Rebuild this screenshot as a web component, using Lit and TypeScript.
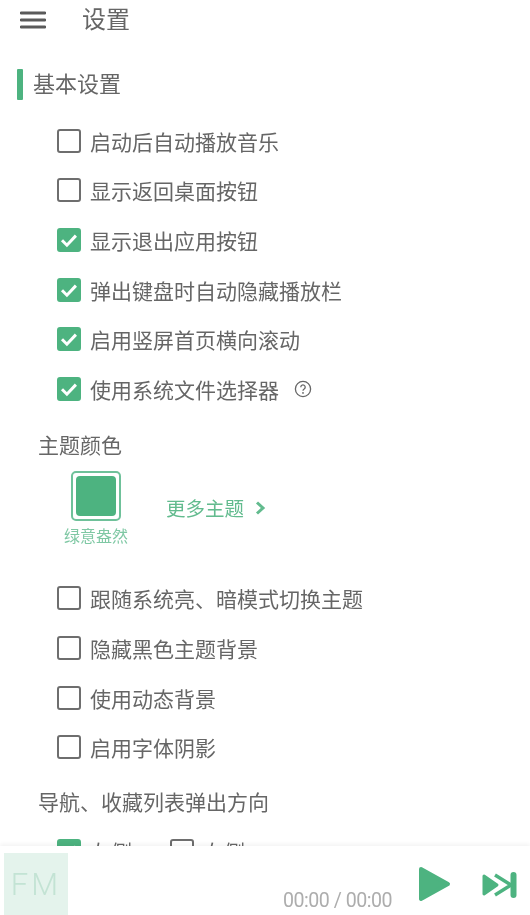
import { LitElement, html, css } from "lit";
import { customElement } from "lit/decorators.js";

const group1: [string, boolean][] = [
  ["启动后自动播放音乐", false],
  ["显示返回桌面按钮", false],
  ["显示退出应用按钮", true],
  ["弹出键盘时自动隐藏播放栏", true],
  ["启用竖屏首页横向滚动", true],
  ["使用系统文件选择器", true],
];
const group2: [string, boolean][] = [
  ["跟随系统亮、暗模式切换主题", false],
  ["隐藏黑色主题背景", false],
  ["使用动态背景", false],
  ["启用字体阴影", false],
];

@customElement("app-root")
export class AppRoot extends LitElement {
  static styles = css`
    :host {
      display: flex;
      flex-direction: column;
      width: 530px;
      height: 915px;
      overflow: hidden;
      background: #fff;
      color: #666;
      font-family: "Noto Sans CJK SC", "Liberation Sans", sans-serif;
      filter: blur(0.45px);
    }
    .main { flex: 1; min-height: 0; overflow: hidden; display: flex; flex-direction: column; }
    .header { height: 40px; display: flex; align-items: center; padding-left: 20px; flex: none; }
    .menu { width: 26px; height: 20px; flex: none; }
    .title { margin-left: 36px; font-size: 24px; line-height: 36px; padding-bottom: 4px; color: #666; }
    .section { display: flex; align-items: center; margin: 28px 0 0 17px; height: 32px; flex: none; }
    .bar { width: 6px; height: 31px; background: #4db380; border-radius: 1px; flex: none; }
    .section-title { margin-left: 10px; font-size: 22px; line-height: 28px; padding-bottom: 4px; color: #666; }
    .list { display: flex; flex-direction: column; padding-left: 57px; margin-top: 16px; flex: none; }
    .row { display: flex; align-items: center; height: 49.6px; font-size: 21px; }
    .box { width: 24px; height: 24px; box-sizing: border-box; border: 2.4px solid #6e6e6e; border-radius: 3px; flex: none; margin-right: 9px; }
    .box.on { background: #4db380; border-color: #4db380; display: flex; align-items: center; justify-content: center; }
    .box svg { width: 20px; height: 20px; flex: none; }
    .help { width: 18px; height: 18px; margin-left: 15px; flex: none; }
    .sub { font-size: 21px; line-height: 30px; margin: 15px 0 0 38px; color: #666; flex: none; }
    .theme { display: flex; margin: 12px 0 0 64px; flex: none; }
    .swatch-col { display: flex; flex-direction: column; align-items: center; width: 64px; }
    .swatch { width: 50px; height: 50px; box-sizing: border-box; border: 2px solid #6fc19a; border-radius: 5px; padding: 3px; }
    .swatch div { width: 100%; height: 100%; background: #4db380; border-radius: 4px; }
    .swatch-name { font-size: 16px; line-height: 22px; margin-top: 3px; color: #7fc8a4; white-space: nowrap; }
    .more { display: flex; align-items: center; height: 50px; margin: 12px 0 0 38px; font-size: 19.5px; color: #62bb8e; }
    .more svg { width: 12px; height: 16px; margin-left: 10px; }
    .list.two { margin-top: 28px; }
    .nav-title { margin-top: 14px; }
    .radios { display: flex; align-items: center; height: 50px; padding-left: 57px; margin-top: 10px; flex: none; font-size: 21px; }
    .radios .item { display: flex; align-items: center; width: 113px; }
    .footer {
      flex: none; height: 69px; display: flex; align-items: stretch; background: #fff;
      box-shadow: 0 -2px 4px rgba(0, 0, 0, 0.05); position: relative;
    }
    .cover {
      width: 64px; height: 62px; margin: 7px 0 0 4px; background: #e4f3ec; color: #c3e3d4;
      font-family: Roboto, "Liberation Sans", sans-serif; font-weight: 300; font-size: 31px; letter-spacing: 3px;
      display: flex; align-items: center; justify-content: center;
    }
    .time { margin-left: auto; margin-top: 43px; font-size: 19.6px; letter-spacing: -0.5px; line-height: 24px; color: #adadad; font-family: Roboto, "Liberation Sans", sans-serif; }
    .ctrl { display: flex; align-items: flex-start; margin-left: 26px; padding-right: 12px; }
    .play { width: 33px; height: 36px; margin-top: 20px; }
    .next { width: 36px; height: 26px; margin: 26px 0 0 31px; }
  `;

  private check(on: boolean) {
    return on
      ? html`<span class="box on"><svg viewBox="0 0 20 20"><path d="M3 10.3l4.9 4.9 9-9.6" fill="none" stroke="#fff" stroke-width="3"/></svg></span>`
      : html`<span class="box"></span>`;
  }

  private row(text: string, on: boolean, help = false) {
    return html`<div class="row">${this.check(on)}<span>${text}</span>${help
      ? html`<svg class="help" viewBox="0 0 18 18"><circle cx="9" cy="9" r="7.6" fill="none" stroke="#666" stroke-width="1.3"/><path d="M6.8 7.2a2.2 2.2 0 1 1 3.4 1.8c-.8.5-1.2 1-1.2 1.8" fill="none" stroke="#666" stroke-width="1.3"/><circle cx="9" cy="12.9" r=".9" fill="#666"/></svg>`
      : ""}</div>`;
  }

  render() {
    return html`
      <div class="main">
        <div class="header">
          <svg class="menu" viewBox="0 0 26 20"><path d="M1 3h24M1 10h24M1 17h24" stroke="#5a5a5a" stroke-width="2.8" stroke-linecap="round"/></svg>
          <span class="title">设置</span>
        </div>
        <div class="section"><span class="bar"></span><span class="section-title">基本设置</span></div>
        <div class="list">${group1.map(([t, on], i) => this.row(t, on, i === 5))}</div>
        <div class="sub">主题颜色</div>
        <div class="theme">
          <div class="swatch-col">
            <div class="swatch"><div></div></div>
            <div class="swatch-name">绿意盎然</div>
          </div>
          <div class="more">更多主题
            <svg viewBox="0 0 12 16"><path d="M3 2.5l6 5.5-6 5.5" fill="none" stroke="#62bb8e" stroke-width="3"/></svg>
          </div>
        </div>
        <div class="list two">${group2.map(([t, on]) => this.row(t, on))}</div>
        <div class="sub nav-title">导航、收藏列表弹出方向</div>
        <div class="radios">
          <div class="item">${this.check(true)}<span>左侧</span></div>
          <div class="item">${this.check(false)}<span>右侧</span></div>
        </div>
      </div>
      <div class="footer">
        <div class="cover">FM</div>
        <span class="time">00:00 / 00:00</span>
        <div class="ctrl">
          <svg class="play" viewBox="0 0 33 36"><path d="M3 3l27 15L3 33z" fill="#4db380" stroke="#4db380" stroke-width="4" stroke-linejoin="round"/></svg>
          <svg class="next" viewBox="0 0 36 26"><path d="M2 4l13 9-13 9z" fill="#4db380" stroke="#4db380" stroke-width="3" stroke-linejoin="round"/><path d="M13 3l16 10-16 10" fill="none" stroke="#4db380" stroke-width="3.4" stroke-linejoin="round"/><path d="M31.5 3v20" stroke="#4db380" stroke-width="6" stroke-linecap="round"/></svg>
        </div>
      </div>
    `;
  }
}
